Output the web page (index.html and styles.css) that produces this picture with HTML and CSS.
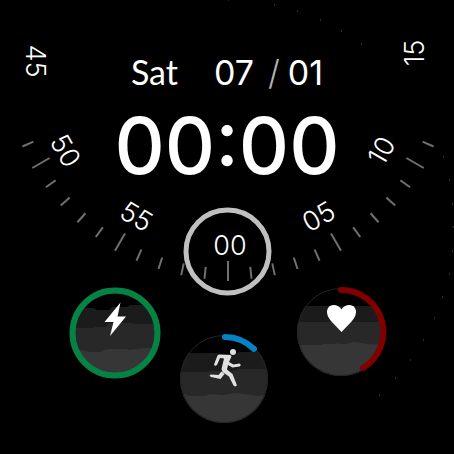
FILE: index.html
```html
<!DOCTYPE html>
<html lang="en">
<head>
<meta charset="utf-8">
<meta name="viewport" content="width=device-width, initial-scale=1">
<title>Watch face</title>
<link rel="stylesheet" href="styles.css">
</head>
<body>
<main class="face">
  <svg class="dial" viewBox="0 0 454 454" aria-hidden="true">
    <g class="specks">
      <path d="M228 0h1M274 5h1M297 11h1M320 20h1M341 31h1M361 44h1M443 157h1M449 180h1M452 204h1M453 227h1M452 251h1M449 274h1M442 297h1M434 318h1M423 340h1M410 360h1M395 378h1M379 395h1"/>
    </g>
    <g class="ticks">
      <path d="M228 261V281"/>
      <path d="M228 261V281" transform="rotate(30 228 55)"/>
      <path d="M228 261V281" transform="rotate(60 228 55)"/>
      <path d="M228 261V281" transform="rotate(-30 228 55)"/>
      <path d="M228 261V281" transform="rotate(-60 228 55)"/>
      <path d="M228 268V280" transform="rotate(6 228 55)"/>
      <path d="M228 268V280" transform="rotate(12 228 55)"/>
      <path d="M228 268V280" transform="rotate(18 228 55)"/>
      <path d="M228 268V280" transform="rotate(24 228 55)"/>
      <path d="M228 268V280" transform="rotate(36 228 55)"/>
      <path d="M228 268V280" transform="rotate(42 228 55)"/>
      <path d="M228 268V280" transform="rotate(48 228 55)"/>
      <path d="M228 268V280" transform="rotate(54 228 55)"/>
      <path d="M228 268V280" transform="rotate(66 228 55)"/>
      <path d="M228 268V280" transform="rotate(-6 228 55)"/>
      <path d="M228 268V280" transform="rotate(-12 228 55)"/>
      <path d="M228 268V280" transform="rotate(-18 228 55)"/>
      <path d="M228 268V280" transform="rotate(-24 228 55)"/>
      <path d="M228 268V280" transform="rotate(-36 228 55)"/>
      <path d="M228 268V280" transform="rotate(-42 228 55)"/>
      <path d="M228 268V280" transform="rotate(-48 228 55)"/>
      <path d="M228 268V280" transform="rotate(-54 228 55)"/>
      <path d="M228 268V280" transform="rotate(-66 228 55)"/>
    </g>
    <g class="marks">
      <text transform="translate(35 61) rotate(90)" y="9">45</text>
      <text transform="translate(65 151) rotate(60)" y="9">50</text>
      <text transform="translate(136 217) rotate(30)" y="9">55</text>
      <text transform="translate(230 246)" y="9">00</text>
      <text transform="translate(319 217) rotate(-30)" y="9">05</text>
      <text transform="translate(382 151) rotate(-60)" y="9">10</text>
      <text transform="translate(415 53) rotate(-90)" y="9">15</text>
    </g>
    <circle class="lens" cx="227.500" cy="251.500" r="41.500"/>
  </svg>

  <header class="readout">
    <p class="date">
      <span class="weekday">Sat</span>
      <span class="day"><span>07</span><span class="slash">/</span><span>01</span></span>
    </p>
    <p class="time">00:00</p>
  </header>

  <section class="gauges">
    <svg class="gauge" viewBox="0 0 92 92" role="img" aria-label="Battery">
      <clipPath id="disc-a"><circle cx="46" cy="46" r="43"/></clipPath>
      <g clip-path="url(#disc-a)">
        <path class="band-1" d="M0 21H25L28 23H40L43 20H58L61 18H74L77 21H92V92H0Z"/>
        <path class="band-2" d="M0 41H24L26 40H37L40 36H62L66 37H92V92H0Z"/>
        <path class="band-3" d="M0 63H12L16 64L20 65H32L35 63L40 62H57L60 63L68 62L76 61L92 62V92H0Z"/>
      </g>
      <circle class="arc green" cx="46" cy="46" r="42.500"/>
      <path class="glyph" d="M51.500 15.500L35.500 35H44.500L41 49L57 29.500H48.500Z"/>
    </svg>
    <svg class="gauge low" viewBox="0 0 92 92" role="img" aria-label="Activity">
      <clipPath id="disc-b"><circle cx="46" cy="46" r="44"/></clipPath>
      <g clip-path="url(#disc-b)">
        <path class="band-1" d="M0 20H40L43 21H57L61 19H92V92H0Z"/>
        <path class="band-2" d="M0 39H30L33 38H56L61 36H92V92H0Z"/>
        <path class="band-3" d="M0 61H7L10 63H28L31 61L45 62L57 60L66 61L75 62L80 63L92 61V92H0Z"/>
      </g>
      <circle class="rim" cx="46" cy="46" r="43.500"/>
      <path class="arc blue" d="M47 4A42 42 0 0 1 76 16"/>
      <circle class="runner" cx="55" cy="19" r="3"/>
      <path class="runner" d="M41 21.500L52.500 22L53.500 23.500L51 29L55.500 31.500L61.500 30.500L63 32L61.500 33.500L54.500 34.500L50 32L49 36.500L54.500 41L59 52.500L57 53.500L55.500 52.500L51 43.500L44.500 39L43.500 36L46 25.500L42 25L39 32L37 33L36 31.500L39.500 22.500ZM43.500 38.500L46.500 41L42.500 46L33 44L31.500 42.500L33 41.500L40.500 42Z"/>
    </svg>
    <svg class="gauge" viewBox="0 0 92 92" role="img" aria-label="Heart rate">
      <clipPath id="disc-c"><circle cx="46" cy="45" r="44"/></clipPath>
      <g clip-path="url(#disc-c)">
        <path class="band-1" d="M0 19H92V92H0Z"/>
        <path class="band-2" d="M0 35H92V92H0Z"/>
        <path class="band-3" d="M0 58H27L28 57H40L43 56L44 57H51L58 55H61L66 56L72 57L92 58V92H0Z"/>
      </g>
      <circle class="rim" cx="46" cy="45" r="43.500"/>
      <path class="arc red" d="M46 3A42 42 0 0 1 68 81"/>
      <path class="glyph" d="M46.500 45L36 34Q31.500 28.500 32 24Q33 18 38.500 18Q44 18 46.500 22.500Q49 18 54.500 18Q60 18 61 24Q61.500 28.500 57 34Z"/>
    </svg>
  </section>
</main>
</body>
</html>
```

FILE: styles.css
```css
* {
  box-sizing: border-box;
}

body {
  margin: 0;
  background: #000;
  color: #fff;
  font-family: Inter, "Liberation Sans", sans-serif;
}

p {
  margin: 0;
}

.face {
  position: relative;
  max-width: 640px;
  min-height: 100vh;
  margin: 0 auto;
  padding-top: 50px;
}

.dial {
  position: absolute;
  top: 0;
  left: 0;
  width: 100%;
}

.specks {
  stroke: #555;
}

.ticks {
  stroke: #707074;
  stroke-width: 2;
}

.marks {
  fill: #fff;
  font-size: 27px;
  font-weight: 300;
  text-anchor: middle;
}

.lens {
  fill: none;
  stroke: #c0c0c0;
  stroke-width: 5;
}

.readout {
  position: relative;
  display: flex;
  flex-direction: column;
  align-items: center;
  gap: 16px;
}

.date {
  display: flex;
  align-items: baseline;
  gap: 36px;
  font-size: 34px;
  line-height: 44px;
}

.weekday {
  font-family: Lato, "Liberation Sans", sans-serif;
  font-size: 34px;
}

.day {
  display: flex;
}

.slash {
  margin: 0 8px 0 14px;
  color: #b4b4b4;
  font-weight: 300;
}

.time {
  font-size: 78px;
  font-weight: 500;
  line-height: 70px;
}

.gauges {
  position: relative;
  display: flex;
  justify-content: center;
  margin-top: 106px;
  padding-left: 2px;
}

.gauge {
  width: 92px;
  height: 92px;
}

.low {
  margin: 46px 25px 0 17px;
}

.band-1 {
  fill: #1b1b1b;
}

.band-2 {
  fill: #282828;
}

.band-3 {
  fill: #363636;
}

.rim {
  fill: none;
  stroke: #242424;
}

.arc {
  fill: none;
  stroke-width: 6;
  stroke-linecap: round;
}

.green {
  stroke: #058345;
}

.blue {
  stroke: #0482c4;
}

.red {
  stroke: #800000;
}

.glyph {
  fill: #fff;
}

.runner {
  fill: #e0e0e0;
}
```
